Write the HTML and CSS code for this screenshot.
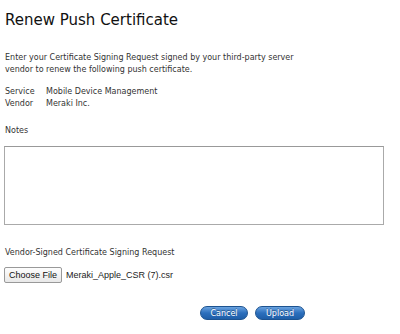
FILE: index.html
```html
<!DOCTYPE html>
<html>
<head>
    <meta charset="UTF-8">
    <title>Renew Push Certificate</title>
    <link rel="stylesheet" href="styles.css">
</head>
<body>

    <!-- Header -->
    <h1 class="title">Renew Push Certificate</h1>

    <p class="intro">Enter your Certificate Signing Request signed by your third-party server vendor to renew the following push certificate.</p>

    <!-- Certificate details -->
    <table class="details">
        <tr><td class="label">Service</td><td>Mobile Device Management</td></tr>
        <tr><td class="label">Vendor</td><td>Meraki Inc.</td></tr>
    </table>

    <!-- Notes -->
    <div class="notes">
        <div class="field-label">Notes</div>
        <textarea class="notes-box"></textarea>
    </div>

    <!-- Upload -->
    <div class="csr">
        <div class="field-label">Vendor-Signed Certificate Signing Request</div>
        <div class="file-row">
            <button class="file-btn">Choose File</button>
            <span class="file-name">Meraki_Apple_CSR (7).csr</span>
        </div>
    </div>

    <div class="actions">
        <button class="pill">Cancel</button>
        <button class="pill">Upload</button>
    </div>

</body>
</html>
```

FILE: styles.css
```css
/* General Styling */
body {
    font-family: 'DejaVu Sans', sans-serif;
    color: #333;
    margin: 0;
    padding: 0 5px;
    background: #fff;
    font-size: 8px;
}

.title {
    font-size: 15px;
    font-weight: normal;
    color: #111;
    margin: 0;
    padding-top: 10px;
    line-height: 20px;
}

.intro {
    max-width: 315px;
    margin: 22px 0 0;
    line-height: 12px;
}

.details {
    border-collapse: collapse;
    margin-top: 10px;
}

.details td {
    padding: 0;
    line-height: 12px;
    font-size: 8px;
    color: #333;
}

.details .label {
    width: 41px;
}

.notes {
    margin-top: 15px;
}

.field-label {
    line-height: 12px;
}

.notes-box {
    display: block;
    box-sizing: border-box;
    width: 380px;
    height: 79px;
    margin: 9px 0 0 -1px;
    border: 1px solid #aaa;
    border-top-color: #999;
    resize: none;
}

.csr {
    margin-top: 22px;
}

.file-row {
    display: flex;
    align-items: center;
    margin-top: 8px;
}

.file-btn {
    font-family: 'Liberation Sans', Arial, sans-serif;
    font-size: 9px;
    margin-left: -1px;
    height: 16px;
    padding: 0 4px;
    background: linear-gradient(#fdfdfd, #e8e8e8);
    border: 1px solid #999;
    border-radius: 2px;
    color: #111;
}

.file-name {
    font-family: 'Liberation Sans', Arial, sans-serif;
    font-size: 9px;
    color: #222;
    margin-left: 4px;
}

.actions {
    display: flex;
    gap: 7px;
    margin: 23px 0 0 195px;
}

.pill {
    font-family: 'DejaVu Sans', sans-serif;
    font-size: 8px;
    color: #fff;
    text-shadow: 0 -1px 0 rgba(0, 0, 0, 0.35);
    width: 48px;
    height: 14px;
    padding: 0;
    border: 1px solid #1d5390;
    border-radius: 7px;
    background: linear-gradient(#6aa3e0, #2c6fbd 50%, #1f5ea8);
}

.pill + .pill {
    width: 50px;
}
```
